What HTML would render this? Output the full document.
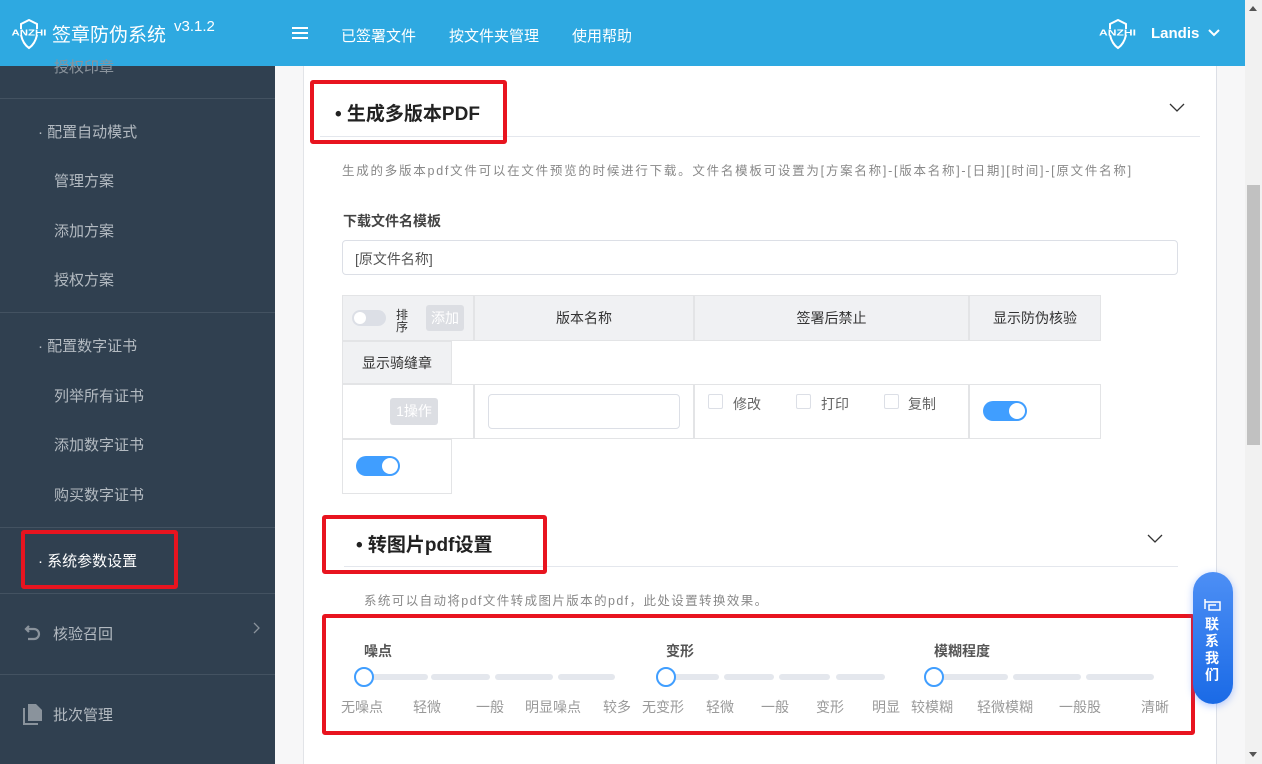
<!DOCTYPE html>
<html><head><meta charset="utf-8"><style>
*{box-sizing:border-box;margin:0;padding:0}
body{width:1262px;height:764px;overflow:hidden;position:relative;background:#f7f7f8;font-family:"Liberation Sans","Noto Sans CJK SC",sans-serif;}
.hdr{position:absolute;left:0;top:0;width:1245px;height:66px;background:#2ea9e1;color:#fff}
.side{position:absolute;left:0;top:66px;width:275px;height:698px;background:#304050;color:#b3bac1;font-size:15px}
.side .it{position:absolute;left:0;width:275px}
.hr{position:absolute;left:0;width:275px;height:1px;background:#435261}
.main{position:absolute;left:303px;top:66px;width:914px;height:698px;background:#fff;border-left:1px solid #e2e4e8;border-right:1px solid #dcdfe6}
.sb{position:absolute;left:1245px;top:0;width:17px;height:764px;background:#f1f1f1}
.abs{position:absolute}
.red{position:absolute;border:4px solid #e8141f;border-radius:3px}
.th{position:absolute;background:#f0f1f3;border:1px solid #e3e4e6;font-size:14px;color:#333;display:flex;align-items:center;justify-content:center}
.td{position:absolute;background:#fff;border:1px solid #e3e4e6}
.sw{position:absolute;width:44px;height:20px;border-radius:10px;background:#409eff}
.sw::after{content:"";position:absolute;right:2px;top:2px;width:16px;height:16px;border-radius:50%;background:#fff}
.cb{position:absolute;width:15px;height:15px;border:1px solid #dcdfe6;border-radius:2px;background:#fff}
.g{color:#888;font-size:14px;position:absolute}
.track{position:absolute;height:6px;background:#e4e7ed;border-radius:3px}
.knob{position:absolute;width:20px;height:20px;border:2px solid #409eff;border-radius:50%;background:#fff}
.lbl{position:absolute;font-size:14px;color:#999;top:697px}
</style></head><body>
<div class="hdr">
 <svg class="abs" style="left:10px;top:19px" width="38" height="32" viewBox="0 0 38 32"><path d="M11 10 L11 5 L19 1 L27 5 L27 10 M11 16 Q13 25 19 29 Q25 25 27 16" fill="none" stroke="#fff" stroke-width="2"/><text x="1.5" y="16.5" font-size="8" font-weight="bold" fill="#fff" font-family="Liberation Sans" textLength="35" lengthAdjust="spacingAndGlyphs">ANZHI</text></svg>
 <div class="abs" style="left:52px;top:20px;font-size:19px">签章防伪系统</div>
 <div class="abs" style="left:174px;top:18px;font-size:15px">v3.1.2</div>
 <div class="abs" style="left:292px;top:27px;width:16px;height:2px;background:#fff;box-shadow:0 5px 0 #fff,0 10px 0 #fff"></div>
 <div class="abs" style="left:341px;top:25px;font-size:15px">已签署文件</div>
 <div class="abs" style="left:449px;top:25px;font-size:15px">按文件夹管理</div>
 <div class="abs" style="left:572px;top:25px;font-size:15px">使用帮助</div>
 <svg class="abs" style="left:1097px;top:19px" width="42" height="32" viewBox="0 0 42 32"><path d="M13 10 L13 5 L21 1 L29 5 L29 10 M13 16 Q15 25 21 29 Q27 25 29 16" fill="none" stroke="#fff" stroke-width="2"/><text x="2" y="16.5" font-size="8" font-weight="bold" fill="#fff" font-family="Liberation Sans" textLength="37" lengthAdjust="spacingAndGlyphs">ANZHI</text></svg>
 <div class="abs" style="left:1151px;top:25px;font-size:15px;font-weight:bold">Landis</div>
 <svg class="abs" style="left:1208px;top:29px" width="12" height="8"><path d="M1 1 L6 6 L11 1" fill="none" stroke="#fff" stroke-width="2"/></svg>
</div>
<div class="side">
 <div class="it" style="top:-10px;left:54px;color:#8a939c">授权印章</div>
 <div class="hr" style="top:32px"></div>
 <div class="it" style="top:55px;left:38px">· 配置自动模式</div>
 <div class="it" style="top:104px;left:54px">管理方案</div>
 <div class="it" style="top:154px;left:54px">添加方案</div>
 <div class="it" style="top:203px;left:54px">授权方案</div>
 <div class="hr" style="top:246px"></div>
 <div class="it" style="top:269px;left:38px">· 配置数字证书</div>
 <div class="it" style="top:319px;left:54px">列举所有证书</div>
 <div class="it" style="top:368px;left:54px">添加数字证书</div>
 <div class="it" style="top:418px;left:54px">购买数字证书</div>
 <div class="hr" style="top:461px"></div>
 <div class="it" style="top:484px;left:38px;color:#fff">· 系统参数设置</div>
 <div class="hr" style="top:527px"></div>
 <svg class="abs" style="left:24px;top:557px" width="18" height="18" viewBox="0 0 18 18"><path d="M5 3 L2 6 L5 9 M2 6 H10 A5 5 0 0 1 10 16 H4" fill="none" stroke="#8a939c" stroke-width="2.2"/></svg>
 <div class="it" style="top:557px;left:53px">核验召回</div>
 <svg class="abs" style="left:253px;top:556px" width="8" height="12"><path d="M1 1 L6 6 L1 11" fill="none" stroke="#8a939c" stroke-width="1.3"/></svg>
 <div class="hr" style="top:608px"></div>
 <svg class="abs" style="left:23px;top:637px" width="20" height="22" viewBox="0 0 20 22"><path d="M1 5 V21 H15" fill="none" stroke="#8a939c" stroke-width="2"/><path d="M5 1 H13 L19 7 V18 H5 Z" fill="#8a939c"/></svg>
 <div class="it" style="top:638px;left:53px">批次管理</div>
</div>
<div class="main"></div>
<div class="abs" style="left:335px;top:99px;font-size:19px;font-weight:bold;color:#222">• 生成多版本PDF</div>
<div class="abs" style="left:320px;top:136px;width:880px;height:1px;background:#e4e7ed"></div>
<svg class="abs" style="left:1169px;top:103px" width="16" height="10"><path d="M1 1 L8 8 L15 1" fill="none" stroke="#333" stroke-width="1.3"/></svg>
<div class="abs" style="left:342px;top:160px;font-size:12.5px;color:#888;letter-spacing:1.75px;white-space:nowrap">生成的多版本pdf文件可以在文件预览的时候进行下载。文件名模板可设置为[方案名称]-[版本名称]-[日期][时间]-[原文件名称]</div>
<div class="abs" style="left:343px;top:211px;font-size:14px;font-weight:bold;color:#444">下载文件名模板</div>
<div class="abs" style="left:342px;top:240px;width:836px;height:35px;border:1px solid #dcdfe6;border-radius:4px;font-size:14px;color:#555;padding:8px 12px">[原文件名称]</div>
<div class="th" style="left:342px;top:295px;width:132px;height:46px"></div>
<div class="abs" style="left:352px;top:310px;width:34px;height:16px;border-radius:8px;background:#dcdfe6"></div>
<div class="abs" style="left:354px;top:312px;width:12px;height:12px;border-radius:50%;background:#fff"></div>
<div class="abs" style="left:396px;top:309px;font-size:12px;line-height:12px;color:#333;width:12px">排序</div>
<div class="abs" style="left:426px;top:305px;width:38px;height:26px;background:#dcdee3;border-radius:3px;color:#fff;font-size:14px;text-align:center;line-height:26px">添加</div>
<div class="th" style="left:474px;top:295px;width:220px;height:46px">版本名称</div>
<div class="th" style="left:694px;top:295px;width:275px;height:46px">签署后禁止</div>
<div class="th" style="left:969px;top:295px;width:132px;height:46px">显示防伪核验</div>
<div class="th" style="left:342px;top:341px;width:110px;height:43px">显示骑缝章</div>
<div class="td" style="left:342px;top:384px;width:132px;height:55px"></div>
<div class="abs" style="left:390px;top:398px;width:48px;height:27px;background:#dcdee3;border-radius:3px;color:#fff;font-size:14px;text-align:center;line-height:27px">1操作</div>
<div class="td" style="left:474px;top:384px;width:220px;height:55px"></div>
<div class="abs" style="left:488px;top:394px;width:192px;height:35px;border:1px solid #dcdfe6;border-radius:4px"></div>
<div class="td" style="left:694px;top:384px;width:275px;height:55px"></div>
<div class="cb" style="left:708px;top:394px"></div><div class="g" style="left:733px;top:394px;color:#666">修改</div>
<div class="cb" style="left:796px;top:394px"></div><div class="g" style="left:821px;top:394px;color:#666">打印</div>
<div class="cb" style="left:884px;top:394px"></div><div class="g" style="left:908px;top:394px;color:#666">复制</div>
<div class="td" style="left:969px;top:384px;width:132px;height:55px"></div>
<div class="sw" style="left:983px;top:401px"></div>
<div class="td" style="left:342px;top:439px;width:110px;height:55px"></div>
<div class="sw" style="left:356px;top:456px"></div>
<div class="abs" style="left:356px;top:530px;font-size:19px;font-weight:bold;color:#222">• 转图片pdf设置</div>
<div class="abs" style="left:344px;top:566px;width:834px;height:1px;background:#e4e7ed"></div>
<svg class="abs" style="left:1147px;top:534px" width="16" height="10"><path d="M1 1 L8 8 L15 1" fill="none" stroke="#333" stroke-width="1.3"/></svg>
<div class="abs" style="left:364px;top:590px;font-size:12.5px;color:#888;letter-spacing:1.4px;white-space:nowrap">系统可以自动将pdf文件转成图片版本的pdf，此处设置转换效果。</div>
<div class="abs" style="left:364px;top:641px;font-size:14px;font-weight:bold;color:#555">噪点</div>
<div class="abs" style="left:666px;top:641px;font-size:14px;font-weight:bold;color:#555">变形</div>
<div class="abs" style="left:934px;top:641px;font-size:14px;font-weight:bold;color:#555">模糊程度</div>
<div class="track" style="left:362px;top:674px;width:66px"></div><div class="track" style="left:431px;top:674px;width:59px"></div><div class="track" style="left:495px;top:674px;width:58px"></div><div class="track" style="left:558px;top:674px;width:57px"></div>
<div class="track" style="left:664px;top:674px;width:55px"></div><div class="track" style="left:724px;top:674px;width:50px"></div><div class="track" style="left:779px;top:674px;width:51px"></div><div class="track" style="left:836px;top:674px;width:49px"></div>
<div class="track" style="left:932px;top:674px;width:76px"></div><div class="track" style="left:1013px;top:674px;width:68px"></div><div class="track" style="left:1086px;top:674px;width:68px"></div>
<div class="knob" style="left:354px;top:667px"></div><div class="knob" style="left:656px;top:667px"></div><div class="knob" style="left:924px;top:667px"></div>
<div class="lbl" style="left:341px">无噪点</div><div class="lbl" style="left:413px">轻微</div><div class="lbl" style="left:476px">一般</div><div class="lbl" style="left:525px">明显噪点</div><div class="lbl" style="left:603px">较多</div>
<div class="lbl" style="left:642px">无变形</div><div class="lbl" style="left:706px">轻微</div><div class="lbl" style="left:761px">一般</div><div class="lbl" style="left:816px">变形</div><div class="lbl" style="left:872px">明显</div>
<div class="lbl" style="left:911px">较模糊</div><div class="lbl" style="left:977px">轻微模糊</div><div class="lbl" style="left:1059px">一般股</div><div class="lbl" style="left:1141px">清晰</div>
<div class="red" style="left:310px;top:80px;width:197px;height:64px"></div>
<div class="red" style="left:322px;top:515px;width:225px;height:59px"></div>
<div class="red" style="left:322px;top:614px;width:873px;height:121px"></div>
<div class="red" style="left:21px;top:530px;width:157px;height:59px"></div>
<div class="abs" style="left:1193px;top:572px;width:40px;height:132px;border-radius:20px;background:linear-gradient(#4d8ff5,#1a6ae6);box-shadow:0 2px 8px rgba(64,120,255,.4)"></div>
<svg class="abs" style="left:1204px;top:598px" width="18" height="14"><path d="M1 1 V11 M1 4 H16 V12 H5 V7 H12" fill="none" stroke="#fff" stroke-width="1.5"/></svg>
<div class="abs" style="left:1205px;top:616px;width:16px;font-size:14px;font-weight:bold;color:#fff;line-height:17px">联系我们</div>
<div class="sb"><div class="abs" style="left:4px;top:6px;border:4px solid transparent;border-bottom:5px solid #555;border-top:0"></div><div class="abs" style="left:2px;top:185px;width:13px;height:260px;background:#c1c1c1"></div><div class="abs" style="left:4px;top:752px;border:4px solid transparent;border-top:5px solid #555;border-bottom:0"></div></div>
</body></html>
